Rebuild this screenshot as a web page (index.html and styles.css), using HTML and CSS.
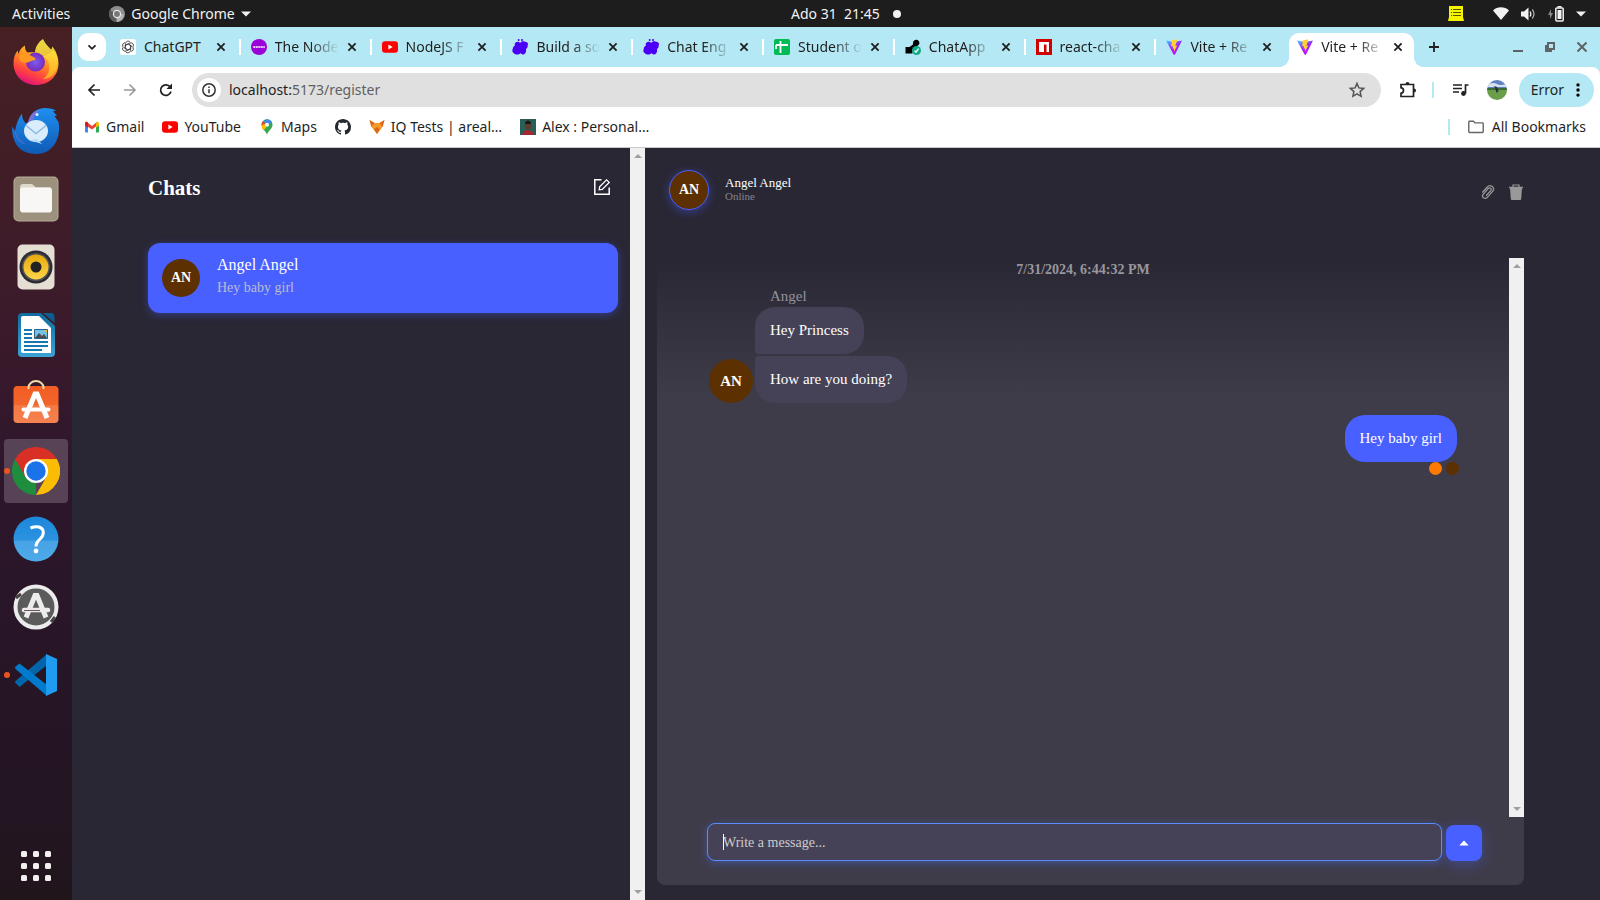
FILE: index.html
```html
<!DOCTYPE html>
<html lang="en">
<head>
<meta charset="utf-8">
<meta name="viewport" content="width=device-width, initial-scale=1">
<title>Vite + React</title>
<link rel="stylesheet" href="styles.css">
</head>
<body>
<svg class="defs" width="0" height="0" aria-hidden="true">
  <defs>
    <linearGradient id="gFox" x1=".8" y1="0" x2=".3" y2="1"><stop offset="0" stop-color="#ffe23c"/><stop offset=".45" stop-color="#ff8a1e"/><stop offset=".75" stop-color="#ff3d45"/><stop offset="1" stop-color="#d9107f"/></linearGradient>
    <linearGradient id="gFoxTail" x1="0" y1="0" x2="0" y2="1"><stop offset="0" stop-color="#fff04a"/><stop offset="1" stop-color="#ffae22"/></linearGradient>
    <radialGradient id="gGlobe"><stop offset="0" stop-color="#7a5cf0"/><stop offset="1" stop-color="#7a2bb8"/></radialGradient>
    <linearGradient id="gBird" x1="0" y1="0" x2="0" y2="1"><stop offset="0" stop-color="#1f8ff0"/><stop offset="1" stop-color="#0f5ab4"/></linearGradient>
    <linearGradient id="gVite" x1="0" y1="0" x2=".6" y2="1"><stop offset="0" stop-color="#41d1ff"/><stop offset=".55" stop-color="#a020ff"/><stop offset="1" stop-color="#bd14fe"/></linearGradient>
    <linearGradient id="gHelp" x1="0" y1="0" x2="0" y2="1"><stop offset="0" stop-color="#1c86dc"/><stop offset=".53" stop-color="#2c92e0"/><stop offset=".54" stop-color="#47a3e6"/><stop offset="1" stop-color="#4daae9"/></linearGradient>
    <linearGradient id="gStore" x1="0" y1="0" x2="0" y2="1"><stop offset="0" stop-color="#f35c22"/><stop offset=".5" stop-color="#f2652c"/><stop offset=".51" stop-color="#f4773f"/><stop offset="1" stop-color="#f58352"/></linearGradient>
    <linearGradient id="gYellow" x1="0" y1="0" x2="0" y2="1"><stop offset="0" stop-color="#e8a90c"/><stop offset="1" stop-color="#fcd64a"/></linearGradient>
    <linearGradient id="gDoc" x1="0" y1="0" x2="0" y2="1"><stop offset="0" stop-color="#116a9e"/><stop offset="1" stop-color="#3ba4d4"/></linearGradient>
    <symbol id="i-vite" viewBox="0 0 16 16"><path fill="url(#gVite)" d="M0 1.600 8 3l8-1.400L8.900 15.700H7.700z"/><path fill="#ffd42a" d="M11.400.2 5.600 1.400 5.300 7.600l1.700-.4-.5 2.600 1.500-.4-.1 3.300L11.300 6.400l-1.900.3L11.400.2z"/></symbol>
    <symbol id="i-x" viewBox="0 0 16 16"><path d="m4.400 4.400 7.200 7.200m0-7.200-7.200 7.200" stroke="currentColor" stroke-width="1.800"/></symbol>
    <symbol id="i-yt" viewBox="0 0 16 16"><rect y="2.300" width="16" height="11.400" rx="3" fill="#f00"/><path fill="#fff" d="m6.400 5.600 4.200 2.400-4.200 2.400z"/></symbol>
    <symbol id="i-engine" viewBox="0 0 16 16"><path fill="currentColor" d="M3.600 3.500C5 2.400 7 2.500 8.100 4 9 2.500 11 1.900 12.800 2.700c2.700-.3 3.900 2.100 2.800 3.900.3 1.600-.4 2.700-1.700 3.300.7 3-.6 5.500-3 5.500-1.300 0-2-.5-2.500-1.400-1.200 1.900-5 2.100-6.200.4-2-.9-2.300-3-1.400-4.700C.9 8 2 7 2.900 6.700 2.500 5.400 2.700 4.200 3.600 3.500z"/><circle cx="6.700" cy="1" r="1" fill="currentColor"/><circle cx="10" cy="1" r="1" fill="currentColor"/></symbol>
    <symbol id="i-caret" viewBox="0 0 10 6"><path fill="currentColor" d="M0 .5h10L5 5.500z"/></symbol>
    <symbol id="i-up" viewBox="0 0 8 4"><path fill="currentColor" d="M0 4 4 0l4 4z"/></symbol>
    <symbol id="i-down" viewBox="0 0 8 4"><path fill="currentColor" d="M0 0h8L4 4z"/></symbol>
  </defs>
</svg>

<header class="topbar">
  <div class="topbar-left">
    <button class="plain">Activities</button>
    <button class="plain appmenu">
      <svg width="16" height="16" viewBox="0 0 16 16"><circle cx="8" cy="8" r="8" fill="#8e8e8e"/><path d="M8 8 1.100 4A8 8 0 0 0 7 15.900z" fill="#5c5c5c"/><path d="M8 8h6.900A8 8 0 0 1 8 16z" fill="#b5b5b5"/><circle cx="8" cy="8" r="4.200" fill="#e6e6e6"/><circle cx="8" cy="8" r="2.900" fill="#777"/></svg>
      <span>Google Chrome</span>
      <svg width="10" height="6"><use href="#i-caret"/></svg>
    </button>
  </div>
  <button class="plain clock"><span>Ado 31&nbsp; 21:45</span><i class="notice"></i></button>
  <div class="status">
    <svg class="note" width="16" height="15" viewBox="0 0 16 15"><path fill="#f4f400" d="M1 0h14v11l1 4H0l1-4z"/><path stroke="#555500" d="M3 3.500h1m1 0h8M3 6.500h1m1 0h8M3 9.500h1m1 0h8"/></svg>
    <svg width="16" height="13" viewBox="0 0 16 13"><path fill="#f2f2f2" d="M8 13 0 3.500C4-.8 12-.8 16 3.500z"/></svg>
    <svg width="15" height="14" viewBox="0 0 15 14"><path fill="#f2f2f2" d="M0 4.500h3L7.500.5v13L3 9.500H0z"/><path fill="none" stroke="#f2f2f2" stroke-width="1.300" d="M9 4.500q1.700 2.500 0 5"/><path fill="none" stroke="#aaa" stroke-width="1.300" d="M11.300 2.500q3.400 4.500 0 9"/></svg>
    <svg width="16" height="16" viewBox="0 0 16 16"><path fill="#888" d="M3 3 0 9h2v4l3-6H3z"/><rect x="7.800" y="2" width="7.400" height="13" rx="1" fill="none" stroke="#f2f2f2" stroke-width="1.500"/><path fill="#f2f2f2" d="M9.500 4h4v9h-4zM9.500 0h4v1.500h-4z"/></svg>
    <svg width="10" height="6"><use href="#i-caret"/></svg>
  </div>
</header>

<div class="desktop">
  <nav class="dock" aria-label="Dock">
    <button class="app" aria-label="Firefox"><svg width="48" height="48" viewBox="0 0 48 48"><path fill="url(#gFox)" d="M24 46C11 46 1.500 36.500 1.500 24c0-5 1.300-9 4-12.500l1 3.500C7.500 11 10 8 13 6.500c-.3 3 .5 5 2.500 7 8-1 14 1 17 4l9-6c3.500 3.500 5 8 5 13C46.500 37 37 46 24 46z"/><path fill="url(#gFoxTail)" d="M31 0c1.500 4 5 7 8 10.500 1-1 1.300-2 1.200-3.300 5.300 6 7.300 15 4.300 23-2.500 6.500-8 10-14 10 6-4 8-10 6-17-1.500-5-7-6-13.500-9.500C23 9 26 3 31 0z" opacity=".9"/><circle cx="23.500" cy="23" r="9.500" fill="url(#gGlobe)"/><path fill="#ff9a20" d="M7 16.500c6-3 10-1.500 16 2.500 1 .8.500 2-1 2.200-3 .4-5 2.300-7.500 2.600C9 24.300 7 21 7 16.500z"/></svg></button>
    <button class="app" aria-label="Thunderbird"><svg width="48" height="48" viewBox="0 0 48 48"><path fill="url(#gBird)" d="M17 14c1-8 8-13 16-13 5 0 8 1 11 2.500l-3 1 4 4-2.500.5 4 6c3 15-5 32-22 32C9 47 0 38 0 19.500l3 5c1-7 3-13 7-18 0 4 1 7 4 10z"/><path fill="#7f6ed8" d="M16 16c1-8 6-12 12-13-4 3-6 5-6.500 9zM2.500 20c1 10 5 14 11 17-6-1-11-7-11-17z"/><circle cx="25" cy="7.500" r="1.500" fill="#dff1ff"/><ellipse cx="24" cy="24" rx="12" ry="11" fill="#d9edfc"/><path d="m14 18.500 10 8 10-8" fill="none" stroke="#8fb9dd" stroke-width="1.500"/><path fill="#bcd9f5" d="m17 33 13 4-5-5z"/></svg></button>
    <button class="app" aria-label="Files"><svg width="46" height="46" viewBox="0 0 46 46"><rect x=".5" y=".5" width="45" height="45" rx="5" fill="#b5ad9b"/><rect x="1.500" y="1.500" width="43" height="43" rx="4" fill="#9b917c"/><path fill="#dfd9cb" d="M7 11q0-3 3-3h9l4 3.500h15V20H7z"/><rect x="7" y="11.500" width="32" height="25" rx="3" fill="#f8f7f5"/></svg></button>
    <button class="app" aria-label="Rhythmbox"><svg width="46" height="46" viewBox="0 0 46 46"><rect x="4.500" y=".5" width="37" height="45" rx="5" fill="#e4ded3"/><circle cx="23" cy="23" r="16.500" fill="#2b2c33"/><circle cx="23" cy="23" r="14" fill="#555"/><circle cx="23" cy="23" r="12.500" fill="url(#gYellow)"/><circle cx="23" cy="23" r="5.500" fill="#222"/></svg></button>
    <button class="app" aria-label="LibreOffice Writer"><svg width="46" height="46" viewBox="0 0 46 46"><path fill="url(#gDoc)" d="M9 1h19l14 13v27q0 4-4 4H9q-4 0-4-4V5q0-4 4-4z"/><path fill="#fff" d="M10 4h16l12 12v25H10q-2 0-2-2V6q0-2 2-2z"/><path fill="#0d5e90" d="M30 1h8q3.500 0 3.500 3.500V11z"/><path stroke="#1679ad" stroke-width="2" d="M11 18h8M11 22h8M11 26h8M11 30h24M11 34h24M11 38h18"/><path fill="#73c2e8" stroke="#23628a" d="M21.500 17.500h13v9h-13z"/><path fill="#4d4d4d" d="m22 26 4-5 3 3 2-2 3 4z"/><path fill="#f5b72a" d="M31 18h3v3z"/></svg></button>
    <button class="app" aria-label="Ubuntu Software"><svg width="46" height="46" viewBox="0 0 46 46"><rect x=".5" y="6" width="45" height="37" rx="4" fill="url(#gStore)"/><path fill="none" stroke="#eedcaa" stroke-width="2" d="M15.500 9V7.500a7.500 6.500 0 0 1 15 0V9"/><path fill="none" stroke="#fff" stroke-width="5" d="m12 38 10-24h2l10 24"/><path stroke="#fff" stroke-width="4" stroke-linecap="round" d="M10.500 29.500h25"/></svg></button>
    <button class="app active" aria-label="Google Chrome"><svg width="48" height="48" viewBox="0 0 48 48"><path fill="#d93025" d="M24 24 3.200 12a24 24 0 0 1 41.600 0z"/><path fill="#1e8e3e" d="M24 24 23.900 48A24 24 0 0 1 3.200 12L13.600 30z"/><path fill="#fbbc04" d="M24 12h20.800A24 24 0 0 1 24 48l10.400-18z"/><path fill="#d93025" d="M3.200 12 13.600 30 24 12h20.800V12z"/><circle cx="24" cy="24" r="12" fill="#fff"/><circle cx="24" cy="24" r="9.700" fill="#1a73e8"/></svg></button>
    <button class="app" aria-label="Help"><svg width="46" height="46" viewBox="0 0 46 46"><circle cx="23" cy="23" r="22.500" fill="url(#gHelp)"/><path fill="none" stroke="#fff" stroke-width="3" d="M17.500 12q5-2 8.500-1c6 2 5 8 1.500 11.500-3 3-4.500 4.500-4.500 8"/><circle cx="23" cy="35" r="2.400" fill="#fff"/></svg></button>
    <button class="app" aria-label="Software Updater"><svg width="46" height="46" viewBox="0 0 46 46"><circle cx="23" cy="23" r="20.500" fill="#5b5b5b" stroke="#ececec" stroke-width="4"/><path stroke="#444" stroke-width="3" d="m3 14 5-4m30 28 4-5"/><path fill="none" stroke="#ececec" stroke-width="5" d="m13 33.500 9-22h2l9 22"/><path stroke="#ececec" stroke-width="4.500" stroke-linecap="round" d="M11 26h24"/><path stroke="#6d5069" d="M11 26.500h16"/></svg></button>
    <button class="app running" aria-label="Visual Studio Code"><svg width="44" height="44" viewBox="0 0 44 44"><path fill="#0065a9" d="M1 29.500 5.500 34 33 12V1L1.500 28z"/><path fill="#007acc" d="M1 14 5.500 10.500 33 32v11L1.500 16z"/><path fill="#1f9cf0" d="m32 1 11 5v32l-11 5z"/></svg></button>
    <button class="app all-apps" aria-label="Show Applications"><svg width="30" height="30" viewBox="0 0 30 30" fill="#f2f0ef"><g id="dots"><rect width="6" height="6" rx="1.500"/><rect x="12" width="6" height="6" rx="1.500"/><rect x="24" width="6" height="6" rx="1.500"/></g><use href="#dots" y="12"/><use href="#dots" y="24"/></svg></button>
  </nav>

  <div class="browser">
    <div class="tabstrip">
      <button class="tab-search" aria-label="Search tabs"><svg width="16" height="16" viewBox="0 0 16 16"><path fill="none" stroke="#222" stroke-width="1.800" d="m4.500 6.300 3.500 3.500 3.500-3.500"/></svg></button>
      <div class="tabs">
        <div class="tab"><svg class="fav" viewBox="0 0 16 16"><rect width="16" height="16" rx="2.500" fill="#fff"/><g fill="none" stroke="#333" stroke-width=".8"><path id="petal" d="M5.500 8.500V4.700a2.600 2.600 0 0 1 4.700-1.500M8 4.800l3 1.800"/><use href="#petal" transform="rotate(60 8 8)"/><use href="#petal" transform="rotate(120 8 8)"/><use href="#petal" transform="rotate(180 8 8)"/><use href="#petal" transform="rotate(240 8 8)"/><use href="#petal" transform="rotate(300 8 8)"/></g></svg><span class="title">ChatGPT</span><button class="close" aria-label="Close tab"><svg><use href="#i-x"/></svg></button></div>
        <div class="tab"><svg class="fav" viewBox="0 0 16 16"><circle cx="8" cy="8" r="8" fill="#9b00d8"/><path stroke="#e9c5f7" stroke-width="2" stroke-dasharray="2 .5" d="M2.300 8h11.500"/></svg><span class="title fade">The Node</span><button class="close" aria-label="Close tab"><svg><use href="#i-x"/></svg></button></div>
        <div class="tab"><svg class="fav"><use href="#i-yt"/></svg><span class="title fade">NodeJS F</span><button class="close" aria-label="Close tab"><svg><use href="#i-x"/></svg></button></div>
        <div class="tab"><svg class="fav engine"><use href="#i-engine"/></svg><span class="title fade">Build a so</span><button class="close" aria-label="Close tab"><svg><use href="#i-x"/></svg></button></div>
        <div class="tab"><svg class="fav engine"><use href="#i-engine"/></svg><span class="title fade">Chat Eng</span><button class="close" aria-label="Close tab"><svg><use href="#i-x"/></svg></button></div>
        <div class="tab"><svg class="fav" viewBox="0 0 16 16"><rect width="16" height="16" rx="2" fill="#0b5"/><path stroke="#fff" stroke-width="1.800" d="M2 6h12M6.500 2v12M2 6v4"/></svg><span class="title fade">Student o</span><button class="close" aria-label="Close tab"><svg><use href="#i-x"/></svg></button></div>
        <div class="tab"><svg class="fav" viewBox="0 0 16 16"><path d="M.5 8h4L8 5.500V4a3.200 3.200 0 1 1 6 1.500L7.500 11v3.500h-7z"/><circle cx="11.500" cy="11.500" r="4.500" fill="#1a8"/><path fill="none" stroke="#fff" stroke-width="1.300" d="m9.500 11.700 1.500 1.500 2.500-3.500"/></svg><span class="title fade">ChatApp</span><button class="close" aria-label="Close tab"><svg><use href="#i-x"/></svg></button></div>
        <div class="tab"><svg class="fav" viewBox="0 0 16 16"><path fill="#d00000" d="M0 0h16v16H0z"/><path fill="#fff" d="M3 3h10v10h-2.500V5.500H8V13H3z"/></svg><span class="title fade">react-cha</span><button class="close" aria-label="Close tab"><svg><use href="#i-x"/></svg></button></div>
        <div class="tab last"><svg class="fav"><use href="#i-vite"/></svg><span class="title fade">Vite + Re</span><button class="close" aria-label="Close tab"><svg><use href="#i-x"/></svg></button></div>
        <div class="tab current"><svg class="fav"><use href="#i-vite"/></svg><span class="title fade">Vite + Re</span><button class="close" aria-label="Close tab"><svg><use href="#i-x"/></svg></button></div>
      </div>
      <button class="newtab" aria-label="New tab"><svg width="12" height="12" viewBox="0 0 12 12"><path stroke="#222" stroke-width="1.800" d="M6 1v10M1 6h10"/></svg></button>
      <div class="winbtns">
        <button aria-label="Minimize"><svg width="12" height="12" viewBox="0 0 12 12"><path stroke="#5f6368" stroke-width="2" d="M1 10h10"/></svg></button>
        <button aria-label="Restore"><svg width="12" height="12" viewBox="0 0 12 12"><path fill="none" stroke="#5f6368" stroke-width="2" d="M4 2h6v6H4zM2 4v6h6"/></svg></button>
        <button aria-label="Close window"><svg width="12" height="12" viewBox="0 0 12 12"><path stroke="#5f6368" stroke-width="2" d="m1.500 1.500 9 9m0-9-9 9"/></svg></button>
      </div>
    </div>

    <div class="toolbar">
      <button class="tool" aria-label="Back"><svg width="16" height="16" viewBox="0 0 16 16"><path fill="none" stroke="#222" stroke-width="1.700" d="M14 8H3m5.500-5.500L3 8l5.500 5.500"/></svg></button>
      <button class="tool" aria-label="Forward"><svg width="16" height="16" viewBox="0 0 16 16"><path fill="none" stroke="#999" stroke-width="1.600" d="M2 8h11M7.500 2.500 13 8l-5.500 5.500"/></svg></button>
      <button class="tool" aria-label="Reload"><svg width="16" height="16" viewBox="0 0 16 16"><path fill="none" stroke="#222" stroke-width="1.700" d="M13 9.500A5.300 5.300 0 1 1 12.200 5"/><path fill="#222" d="M14 1.500V7H8.500z"/></svg></button>
      <div class="omnibox">
        <button class="siteinfo" aria-label="Site information"><svg width="14" height="14" viewBox="0 0 14 14"><circle cx="7" cy="7" r="6.200" fill="none" stroke="#333" stroke-width="1.500"/><path stroke="#333" stroke-width="1.500" d="M7 6.300v4M7 3.500V5"/></svg></button>
        <span class="url"><b>localhost:</b>5173/register</span>
        <button class="star" aria-label="Bookmark this tab"><svg width="18" height="18" viewBox="0 0 18 18"><path fill="none" stroke="#555" stroke-width="1.500" d="m9 2.500 1.900 4.400 4.800.5-3.600 3.200 1 4.700L9 12.900l-4.100 2.400 1-4.700-3.600-3.200 4.800-.5z"/></svg></button>
      </div>
      <button class="tool ext" aria-label="Extensions"><svg width="18" height="18" viewBox="0 0 18 18"><path fill="none" stroke="#222" stroke-width="1.700" d="M2 3.500h12.500v12H2v-3.200q2.500-.5 2.500-2.800T2 6.700z"/><path fill="#222" d="M6.500 3a2 2 0 0 1 4 0zM15 7.500a2 2 0 0 1 0 4z"/></svg></button>
      <i class="bar"></i>
      <button class="tool media" aria-label="Media controls"><svg width="16" height="14" viewBox="0 0 16 14"><path stroke="#222" stroke-width="1.700" d="M0 2h9M0 5.500h9M0 9h6"/><path fill="none" stroke="#222" stroke-width="1.700" d="M15.500 2h-3v8.500"/><circle cx="10.500" cy="10.500" r="2.400" fill="#222"/></svg></button>
      <button class="tool profile" aria-label="Profile"><svg width="20" height="20" viewBox="0 0 20 20"><clipPath id="cp"><circle cx="10" cy="10" r="10"/></clipPath><g clip-path="url(#cp)"><path fill="#5f83c0" d="M0 0h20v9H0z"/><path fill="#d6e1ee" d="M1 4q6-2 9 0t9 0v3H1z"/><path fill="#6a9d4a" d="M0 9h20v11H0z"/><path fill="#3c6b32" d="M0 8h20v2H0z"/><path fill="#252c3f" d="m7 6 3 1 1.500 4-2 2-1-4z"/></g></svg></button>
      <button class="error"><span class="label">Error</span><svg width="4" height="14" viewBox="0 0 4 14"><circle cx="2" cy="1.900" r="1.700"/><circle cx="2" cy="7" r="1.700"/><circle cx="2" cy="12.100" r="1.700"/></svg></button>
    </div>

    <nav class="bookmarks" aria-label="Bookmarks">
      <a href="#"><svg width="16" height="16" viewBox="0 0 16 16"><path fill="#4285f4" d="M1 4h3v9.500H1.500L1 13z"/><path fill="#34a853" d="M12 4h3v9l-.5.500H12z"/><path fill="#ea4335" d="m1 4.500 1.500-2L8 7l5.500-4.500L12 7.500 8 10.500 1 6z"/><path fill="#fbbc04" d="m12 4 2-1.500L15 4v2.500l-3 2z"/><path fill="#c5221f" d="M1 4.500Q1 2 3 3l1 .8v5L1 6.500z"/></svg><span class="label">Gmail</span></a>
      <a href="#"><svg width="16" height="16"><use href="#i-yt"/></svg><span class="label">YouTube</span></a>
      <a href="#"><svg width="16" height="16" viewBox="0 0 16 16"><path fill="#34a853" d="M2.500 5.500A5.500 5.500 0 0 1 13.500 6c0 4-4.500 5.500-5.500 10-.8-4-5.500-6-5.500-10.500z"/><path fill="#4285f4" d="M8 .2a5.500 5.500 0 0 1 4.700 2.500L8.500 7 5 2z"/><path fill="#ea4335" d="M3.700 2.200 7 5 4.500 8 2.500 6q0-2 1.200-3.800z"/><path fill="#fbbc04" d="M2.500 6 6 5l1.500 3-3 3.500Q2.500 9 2.500 6z"/><circle cx="8" cy="5.700" r="2" fill="#fff"/></svg><span class="label">Maps</span></a>
      <a href="#" aria-label="GitHub"><svg width="16" height="16" viewBox="0 0 16 16"><path fill="#24292f" d="M8 0C3.580 0 0 3.580 0 8c0 3.540 2.290 6.530 5.470 7.590.4.070.55-.17.55-.38 0-.19-.01-.82-.01-1.490-2.010.37-2.530-.49-2.690-.94-.09-.23-.48-.94-.82-1.130-.28-.15-.68-.52-.01-.53.63-.01 1.080.58 1.230.82.720 1.210 1.870.87 2.330.66.070-.52.280-.87.510-1.070-1.780-.2-3.640-.89-3.640-3.950 0-.87.310-1.590.82-2.150-.08-.2-.36-1.020.08-2.120 0 0 .67-.21 2.200.82.640-.18 1.320-.27 2-.27s1.360.09 2 .27c1.530-1.040 2.200-.82 2.200-.82.440 1.100.16 1.920.08 2.120.510.560.820 1.270.820 2.150 0 3.070-1.870 3.750-3.650 3.950.290.250.540.730.540 1.480 0 1.070-.01 1.930-.01 2.200 0 .21.150.46.550.38A8.010 8.010 0 0 0 16 8c0-4.420-3.580-8-8-8z"/></svg></a>
      <a href="#"><svg width="16" height="16" viewBox="0 0 16 16"><path fill="#f59b2c" d="m.5 1 5 3h5l5-3-2 7L8 15 2.500 8z"/><path fill="#d9691a" d="m.5 1 5 3L2.500 8zM15.500 1l-5 3 3 4zM5 10l3-2 3 2-3 5z"/></svg><span class="label">IQ Tests | areal…</span></a>
      <a href="#"><svg width="16" height="16" viewBox="0 0 16 16"><path fill="#2a5f58" d="M0 0h16v16H0z"/><path fill="#a32832" d="M2 16q1-4 5-5l5 1q2 1 2 4z"/><ellipse cx="8" cy="6.500" rx="3" ry="4.300" fill="#5d3a2e"/><path fill="#1b1514" d="M5 5q0-3.500 3-3.500T11 5z"/></svg><span class="label">Alex : Personal…</span></a>
      <i class="bar"></i>
      <a class="all" href="#"><svg width="16" height="16" viewBox="0 0 16 16"><path fill="none" stroke="#666" stroke-width="1.400" d="M.8 3q0-.7.700-.7h4l1.500 1.600h7.500q.7 0 .7.700v8.200q0 .7-.7.700h-13q-.7 0-.7-.7z"/></svg><span class="label">All Bookmarks</span></a>
    </nav>

    <main class="page">
      <aside class="chats">
        <div class="chats-body">
          <div class="chats-head">
            <h1>Chats</h1>
            <button class="plain compose" aria-label="New chat"><svg width="18" height="18" viewBox="0 0 18 18" fill="none" stroke="#fff" stroke-width="1.500"><path d="M8.500 1.800H1.800v14.400h14.400V9.500"/><path stroke-width="1.300" d="m6.200 11.800.4-3 7-7 2.600 2.600-7 7z"/></svg></button>
          </div>
          <a class="chat" href="#">
            <span class="avatar">AN</span>
            <span class="chat-text"><span class="chat-name">Angel Angel</span><span class="chat-last">Hey baby girl</span></span>
          </a>
        </div>
        <div class="scrollbar"><svg width="8" height="4"><use href="#i-up"/></svg><svg width="8" height="4"><use href="#i-down"/></svg></div>
      </aside>

      <section class="room">
        <header class="room-head">
          <span class="avatar ring">AN</span>
          <div class="who"><span class="who-name">Angel Angel</span><span class="who-state">Online</span></div>
          <button class="plain action" aria-label="Attach file"><svg width="16" height="16" viewBox="0 0 16 16" fill="none" stroke="#999" stroke-width="1.300"><path d="m2.300 8.500 5-5.500c3-3.200 8.300.5 5.500 4.200l-5.500 6.200c-2.500 2.500-6.200-.5-4.200-3.100l5-5.700c1.700-1.700 4 .2 2.600 2l-4.600 5.200"/></svg></button>
          <button class="plain action" aria-label="Delete chat"><svg width="16" height="16" viewBox="0 0 16 16"><path fill="#999" d="M2 4h12l-.8 11q-.1 1-1 1H3.800q-.9 0-1-1zM1 2.800h14V4.300H1z"/><path fill="none" stroke="#999" stroke-width="1.200" d="M5 3V1h6v2"/></svg></button>
        </header>
        <div class="feed">
          <div class="feed-row">
            <div class="messages">
              <time class="date">7/31/2024, 6:44:32 PM</time>
              <div class="incoming">
                <span class="sender">Angel</span>
                <p class="bubble first">Hey Princess</p>
                <span class="avatar big">AN</span>
                <p class="bubble final">How are you doing?</p>
              </div>
              <div class="outgoing">
                <p class="bubble mine">Hey baby girl</p>
                <div class="reads"><i class="dot orange"></i><i class="dot brown"></i></div>
              </div>
            </div>
            <div class="scrollbar"><svg width="8" height="4"><use href="#i-up"/></svg><svg width="8" height="4"><use href="#i-down"/></svg></div>
          </div>
          <form class="composer">
            <div class="field"><input type="text" placeholder="Write a message..." aria-label="Write a message"><i class="cursor"></i></div>
            <button type="button" class="send" aria-label="Send"><svg width="10" height="6" viewBox="0 0 10 6"><path fill="#fff" d="M.3 5.500 5 .5l4.700 5z"/></svg></button>
          </form>
        </div>
      </section>
    </main>
  </div>
</div>
</body>
</html>
```
FILE: styles.css
```css
* { box-sizing: border-box; }
body {
  margin: 0;
  min-height: 100vh;
  display: flex;
  flex-direction: column;
  font-family: "Noto Sans", "Open Sans", sans-serif;
  font-size: 14px;
  color: #1f1f1f;
}
svg { display: block; flex: none; }
.defs { position: absolute; }
button {
  border: 0;
  padding: 0;
  background: none;
  font: inherit;
  color: inherit;
  display: flex;
  align-items: center;
  justify-content: center;
  flex: none;
}
a { color: inherit; text-decoration: none; }
.label, .title, .url { padding-bottom: 2px; }

/* Desktop panel */
.topbar {
  height: 27px;
  display: flex;
  align-items: center;
  background: #1d1d1d;
  color: #f2f2f2;
  padding: 0 14px 0 12px;
}
.topbar-left { display: flex; gap: 39px; flex: 0 0 calc(50% - 8px); }
.appmenu { gap: 6px; }
.clock { gap: 13px; }
.notice { width: 8px; height: 8px; border-radius: 50%; background: #f2f2f2; }
.status { display: flex; align-items: center; gap: 12px; margin-left: auto; }
.note { margin-right: 17px; }

.desktop { flex: 1; display: flex; }
.dock {
  flex: 0 0 72px;
  display: flex;
  flex-direction: column;
  align-items: center;
  gap: 4px;
  padding: 4px 0 2px;
  background: linear-gradient(#472023 0, #3a1a2b 35%, #2c162b 55%, #231522 90%, #21151c);
}
.app { position: relative; width: 64px; height: 64px; border-radius: 4px; }
.app.active { background: #574355; }
.app.active::before, .app.running::before {
  content: "";
  position: absolute;
  left: 0;
  top: 29px;
  width: 6px;
  height: 6px;
  border-radius: 50%;
  background: #e95420;
}
.all-apps { margin-top: auto; }

/* Browser chrome */
.browser { flex: 1; min-width: 0; display: flex; flex-direction: column; background: #b4e8f4; }
.tabstrip { height: 40px; display: flex; align-items: center; padding: 0 6px; }
.tab-search { width: 28px; height: 28px; border-radius: 10px; background: #fff; margin-right: 6px; }
.tabs { flex: 1; min-width: 0; display: grid; grid-template-columns: repeat(10, minmax(0, 1fr)); align-self: flex-end; }
.tab {
  position: relative;
  height: 34px;
  margin-right: 6px;
  padding: 0 8px 6px;
  display: flex;
  align-items: center;
}
.tab:not(.last, .current)::after {
  content: "";
  position: absolute;
  right: -4px;
  top: 6px;
  width: 2px;
  height: 16px;
  background: #fff;
}
.tab.current { background: #fff; border-radius: 10px 10px 0 0; }
.tab.current::before, .tab.current::after {
  content: "";
  position: absolute;
  bottom: 0;
  width: 10px;
  height: 10px;
}
.tab.current::before { left: -10px; background: radial-gradient(circle at 0 0, transparent 10px, #fff 10px); }
.tab.current::after { right: -10px; background: radial-gradient(circle at 100% 0, transparent 10px, #fff 10px); }
.fav { width: 16px; height: 16px; margin-right: 8px; }
.engine { color: #4b00f5; }
.title { flex: 1; min-width: 0; overflow: hidden; white-space: nowrap; }
.fade { mask-image: linear-gradient(to right, #000 55%, transparent 98%); }
.close, .close svg { width: 16px; height: 16px; }
.close { margin-left: 4px; }
.newtab { width: 28px; height: 28px; }
.winbtns { display: flex; gap: 20px; margin: 0 6px 0 64px; }
.toolbar {
  height: 44px;
  display: flex;
  align-items: center;
  padding: 2px 6px 0 4px;
  background: #fff;
  border-radius: 8px 8px 0 0;
}
.tool { width: 36px; height: 34px; }
.omnibox {
  flex: 1;
  height: 34px;
  display: flex;
  align-items: center;
  margin: 0 9px 0 8px;
  padding: 0 15px 0 5px;
  border-radius: 17px;
  background: #e0e0e0;
}
.siteinfo { width: 24px; height: 24px; border-radius: 50%; background: #fff; }
.url { flex: 1; margin-left: 8px; color: #5f5f5f; }
.url b { font-weight: 400; color: #1f1f1f; }
.bar { width: 2px; height: 16px; background: #b4e8f4; flex: none; }
.ext { margin-right: 6px; }
.media { margin-left: 9px; }
.profile { margin-right: 4px; }
.error { height: 34px; padding: 0 14px 0 12px; gap: 12px; border-radius: 17px; background: #b4e8f4; }
.bookmarks {
  height: 37px;
  display: flex;
  align-items: center;
  gap: 18px;
  padding: 0 14px 4px 12px;
  background: #fff;
  border-bottom: 1px solid #c8c8cc;
}
.bookmarks a { display: flex; align-items: center; gap: 6px; white-space: nowrap; }
.bookmarks .bar { margin-left: auto; }
.bookmarks .all { gap: 8px; }

/* Chat page */
.page {
  flex: 1;
  display: grid;
  grid-template-columns: 3fr 5fr;
  background: #292734;
  color: #fff;
  font-family: "Liberation Serif", serif;
}
.chats { display: flex; }
.chats-body { flex: 1; padding: 28px 12px 0 76px; }
.chats-head { display: flex; justify-content: space-between; align-items: center; height: 24px; padding-right: 7px; }
.chats-head h1 { margin: 0; font-size: 21px; line-height: 24px; }
.compose { padding-bottom: 2px; }
.scrollbar {
  flex: 0 0 15px;
  display: flex;
  flex-direction: column;
  align-items: center;
  justify-content: space-between;
  padding: 6px 0;
  background: #f0f0f0;
  color: #a0a0a0;
}
.avatar {
  display: flex;
  align-items: center;
  justify-content: center;
  flex: none;
  width: 38px;
  height: 38px;
  border-radius: 50%;
  background: #5c3000;
  color: #fff;
  font-size: 14px;
  font-weight: 700;
}
.chat {
  display: flex;
  align-items: center;
  gap: 17px;
  height: 70px;
  margin-top: 43px;
  padding: 0 14px;
  border-radius: 12px;
  background: #4860ff;
  box-shadow: 0 2px 8px rgba(72, 96, 255, .4);
}
.chat-text { display: flex; flex-direction: column; gap: 5px; padding-bottom: 3px; }
.chat-name { font-size: 16px; line-height: 18px; }
.chat-last { font-size: 14px; line-height: 18px; color: #b9bccf; }

.room { display: flex; flex-direction: column; padding: 22px 76px 15px 12px; }
.room-head { display: flex; align-items: center; gap: 12px; height: 40px; padding-left: 12px; }
.ring { width: 40px; height: 40px; border: 1px solid #4860ff; box-shadow: 0 2px 10px rgba(72, 96, 255, .45); }
.who { flex: 1; display: flex; flex-direction: column; padding: 0 4px 2px; }
.who-name { font-size: 13px; line-height: 15px; }
.who-state { font-size: 11px; line-height: 13px; color: #85848c; }
.action { padding-top: 4px; }
.feed {
  flex: 1;
  display: flex;
  flex-direction: column;
  margin-top: 48px;
  border-radius: 8px;
  background: linear-gradient(#292734 0, #3f3c4a 140px);
}
.feed-row { flex: 1; display: flex; }
.messages { flex: 1; display: flex; flex-direction: column; padding: 4px 50px 0; font-size: 15px; }
.date { text-align: center; font-size: 14px; font-weight: 700; line-height: 16px; color: #98979d; }
.incoming {
  display: grid;
  grid-template-columns: 44px 1fr;
  column-gap: 2px;
  row-gap: 2px;
  justify-items: start;
  align-items: end;
  margin: 9px 2px 12px;
}
.sender { grid-column: 2; padding-left: 15px; line-height: 18px; color: #93929a; }
.bubble { margin: 0; padding: 15px; line-height: 17px; border-radius: 20px; background: #454258; }
.first { grid-column: 2; border-bottom-left-radius: 4px; }
.final { border-top-left-radius: 4px; }
.big { width: 44px; height: 44px; font-size: 15px; }
.outgoing { display: flex; flex-direction: column; align-items: flex-end; }
.mine { margin-right: 2px; background: #4860ff; }
.reads { display: flex; gap: 4px; }
.dot { width: 13px; height: 13px; border-radius: 50%; }
.orange { background: #ff7a00; }
.brown { background: #5c3000; }
.composer { display: flex; align-items: flex-end; gap: 4px; padding: 6px 42px 24px 50px; }
.field { position: relative; flex: 1; display: flex; }
.field input {
  flex: 1;
  height: 38px;
  padding: 2px 15px 0;
  border: 1px solid #5a8cff;
  border-radius: 8px;
  outline: 0;
  background: #454258;
  box-shadow: 0 2px 8px rgba(72, 120, 255, .4);
  font: 14px "Liberation Serif", serif;
  color: #fff;
}
.field input::placeholder { color: #ccc; }
.cursor { position: absolute; left: 16px; top: 11px; width: 1px; height: 16px; background: #fff; }
.send { width: 36px; height: 36px; border-radius: 8px; background: #4860ff; box-shadow: 0 4px 14px rgba(72, 96, 255, .35); }
```
